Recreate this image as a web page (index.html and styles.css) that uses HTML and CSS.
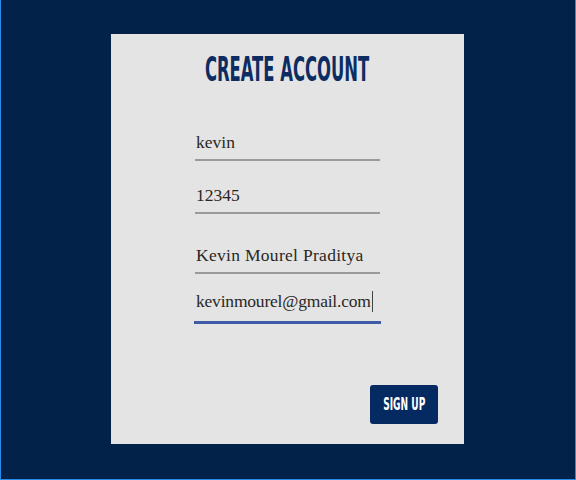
FILE: index.html
```html
<!DOCTYPE html>
<html lang="en">
<head>
<meta charset="utf-8">
<title>Create Account</title>
<link rel="stylesheet" href="styles.css">
</head>
<body>
<div class="frame">
  <div class="card">
    <div class="title"><span class="title-text">CREATE ACCOUNT</span></div>
    <div class="field field-user">kevin</div>
    <div class="field field-pass">12345</div>
    <div class="field field-name">Kevin Mourel Praditya</div>
    <div class="field field-mail is-focused">kevinmourel@gmail.com<span class="caret"></span></div>
    <button class="btn" type="button"><span class="btn-text">SIGN UP</span></button>
  </div>
</div>
</body>
</html>
```
FILE: styles.css
```css
html, body {
  margin: 0;
  padding: 0;
}
body {
  background: #02224a;
}
.frame {
  box-sizing: border-box;
  width: 576px;
  height: 480px;
  border-left: 1px solid #2a8be8;
  border-right: 1px solid #2a8be8;
  border-bottom: 1px solid #2a8be8;
  padding: 34px 0 0 110px;
}
.card {
  box-sizing: border-box;
  width: 353px;
  height: 410px;
  background: #e4e4e4;
  padding: 16px 0 20px;
  display: flex;
  flex-direction: column;
}
.title {
  height: 40px;
  line-height: 40px;
  text-align: center;
  font-family: "DejaVu Sans Condensed", "DejaVu Sans", sans-serif;
  font-weight: bold;
  font-size: 24px;
  color: #0c2c62;
}
.title-text {
  display: inline-block;
  transform: scale(0.76, 1.37);
}
.field {
  width: 184px;
  margin-left: 84px;
  font-family: "Liberation Serif", serif;
  font-size: 17.5px;
  line-height: 20px;
  color: #2a2723;
  padding: 0 0 7px 1px;
  box-sizing: content-box;
  border-bottom: 2px solid #9a9a9a;
  white-space: nowrap;
}
.field-user { margin-top: 42px; }
.field-pass { margin-top: 24px; }
.field-name { margin-top: 31px; letter-spacing: 0.3px; }
.field-mail {
  margin-top: 17px;
  margin-left: 83px;
  width: 185px;
  padding-left: 2px;
  padding-bottom: 9px;
  border-bottom: 3px solid #3f5ba8;
  letter-spacing: -0.2px;
}
.caret {
  display: inline-block;
  width: 1px;
  height: 21px;
  background: #444;
  vertical-align: -5px;
  margin-left: 1px;
}
.btn {
  margin-top: auto;
  align-self: flex-end;
  margin-right: 26px;
  width: 68px;
  height: 39px;
  border: none;
  border-radius: 3px;
  background: #052a62;
  color: #ffffff;
  padding: 0;
  font-family: "DejaVu Sans Condensed", "DejaVu Sans", sans-serif;
  font-weight: bold;
  font-size: 14px;
  line-height: 39px;
}
.btn-text {
  display: inline-block;
  transform: scale(0.72, 1.27);
}
```
